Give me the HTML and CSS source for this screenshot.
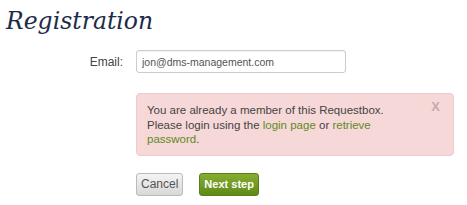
FILE: index.html
```html
<!DOCTYPE html>
<html>
<head>
  <title>Registration</title>
  <link rel="stylesheet" href="styles.css">
</head>
<body>
  <div class="page">
    <h1>Registration</h1>

    <div class="form-row">
      <label for="email">Email:</label>
      <input id="email" type="text" value="jon@dms-management.com">
    </div>

    <div class="form-row">
      <span class="label-space"></span>
      <div class="alert">
        <span class="close">X</span>
        <p>You are already a member of this Requestbox.</p>
        <p>Please login using the <a href="#">login page</a> or <a href="#">retrieve password</a>.</p>
      </div>
    </div>

    <div class="form-row buttons">
      <span class="label-space"></span>
      <button class="btn btn-cancel">Cancel</button>
      <button class="btn btn-next">Next step</button>
    </div>
  </div>
</body>
</html>
```

FILE: styles.css
```css
body {
  margin: 0;
  background: #fff;
  font-family: "Liberation Sans", Arial, sans-serif;
  font-size: 12px;
  color: #333;
}

.page {
  padding: 6px 0 0 6px;
}

h1 {
  margin: 0 0 14px 0;
  font-family: "DejaVu Serif", Georgia, serif;
  font-style: italic;
  font-weight: normal;
  font-size: 23.5px;
  line-height: 30px;
  color: #1d2b4a;
}

.form-row {
  display: flex;
  align-items: center;
}

.form-row label,
.label-space {
  width: 117px;
  padding-right: 13px;
  text-align: right;
  flex-shrink: 0;
}

.form-row label {
  font-size: 12px;
  color: #444;
}

input {
  width: 198px;
  height: 21px;
  padding: 0 5px;
  border: 1px solid #ccc;
  border-radius: 3px;
  font-family: "Liberation Sans", Arial, sans-serif;
  font-size: 10.5px;
  color: #555;
  box-shadow: inset 0 1px 1px rgba(0, 0, 0, 0.05);
}

.alert {
  position: relative;
  margin-top: 20px;
  width: 256px;
  padding: 9px 50px 8px 10px;
  background: #f7d8d8;
  border: 1px solid #efcaca;
  border-radius: 4px;
  font-size: 11.5px;
  line-height: 14.5px;
  color: #444;
}

.alert p {
  margin: 0;
}

.alert a {
  color: #5e8a22;
  text-decoration: none;
}

.alert .close {
  position: absolute;
  top: 6px;
  right: 13px;
  font-size: 13px;
  font-weight: bold;
  color: #c9a9a9;
}

.buttons {
  margin-top: 17px;
  gap: 16px;
}

.buttons .label-space {
  margin-right: -16px;
}

.btn {
  height: 23px;
  padding: 0 4px;
  border-radius: 3px;
  font-family: "Liberation Sans", Arial, sans-serif;
  font-size: 12px;
  cursor: pointer;
}

.btn-cancel {
  background: linear-gradient(#f4f4f4, #d8d8d8);
  border: 1px solid #bbb;
  color: #555;
}

.btn-next {
  background: linear-gradient(#84ad2f, #5f8a18);
  border: 1px solid #5a7f1a;
  color: #fff;
  font-size: 11px;
  font-weight: bold;
}
```
